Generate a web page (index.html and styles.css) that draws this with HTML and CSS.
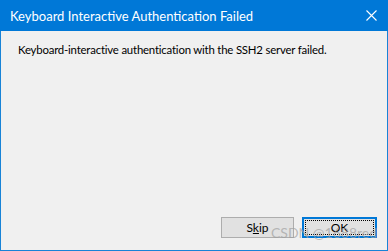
FILE: index.html
```html
<!DOCTYPE html>
<html>
<head>
    <title>Keyboard Interactive Authentication Failed</title>
    <meta charset="utf-8">
    <link rel="stylesheet" href="styles.css">
</head>
<body>

    <div class="window">
        <div class="titlebar">
            <span class="title">Keyboard Interactive Authentication Failed</span>
            <svg class="close" width="11" height="11" viewBox="0 0 11 11">
                <path d="M0.5 0.5 L10.5 10.5 M10.5 0.5 L0.5 10.5" stroke="#ffffff" stroke-width="1.1" fill="none"/>
            </svg>
        </div>

        <div class="content">
            <p class="message">Keyboard-interactive authentication with the SSH2 server failed.</p>

            <div class="buttons">
                <button class="btn">S<u>k</u>ip</button>
                <button class="btn default"><span class="focus">OK</span></button>
            </div>
        </div>

        <div class="watermark">CSDN @1688red</div>
    </div>

</body>
</html>
```

FILE: styles.css
```css
body {
    margin: 0;
    font-family: Lato, "Noto Sans", sans-serif;
}

.window {
    position: relative;
    box-sizing: border-box;
    width: 388px;
    height: 251px;
    display: flex;
    flex-direction: column;
    background-color: #f0f0f0;
    border: 1px solid #1883d7;
    border-top: none;
}

.titlebar {
    height: 31px;
    margin: 0 -1px;
    background-color: #0078d7;
    display: flex;
    align-items: center;
    justify-content: space-between;
    padding: 0 11px 0 10px;
}

.title {
    color: #ffffff;
    font-size: 13px;
}

.close {
    display: block;
}

.content {
    flex: 1;
    display: flex;
    flex-direction: column;
    padding: 11px 10px 12px 17px;
}

.message {
    margin: 0;
    font-size: 11.4px;
    letter-spacing: -0.2px;
    line-height: 16px;
    color: #000000;
}

.buttons {
    margin-top: auto;
    display: flex;
    justify-content: flex-end;
    gap: 8px;
}

.btn {
    box-sizing: border-box;
    width: 73px;
    height: 21px;
    padding: 0;
    font-family: Lato, "Noto Sans", sans-serif;
    font-size: 12px;
    color: #000000;
    background-color: #e1e1e1;
    border: 1px solid #adadad;
}

.default {
    width: 75px;
    border: 2px solid #0078d7;
    padding: 1px;
}

.focus {
    display: block;
    height: 100%;
    box-sizing: border-box;
    border: 1px dotted #000000;
    line-height: 13px;
}

.watermark {
    position: absolute;
    left: 270px;
    top: 224px;
    font-size: 14px;
    white-space: nowrap;
    color: rgba(160, 160, 160, 0.7);
}
```
